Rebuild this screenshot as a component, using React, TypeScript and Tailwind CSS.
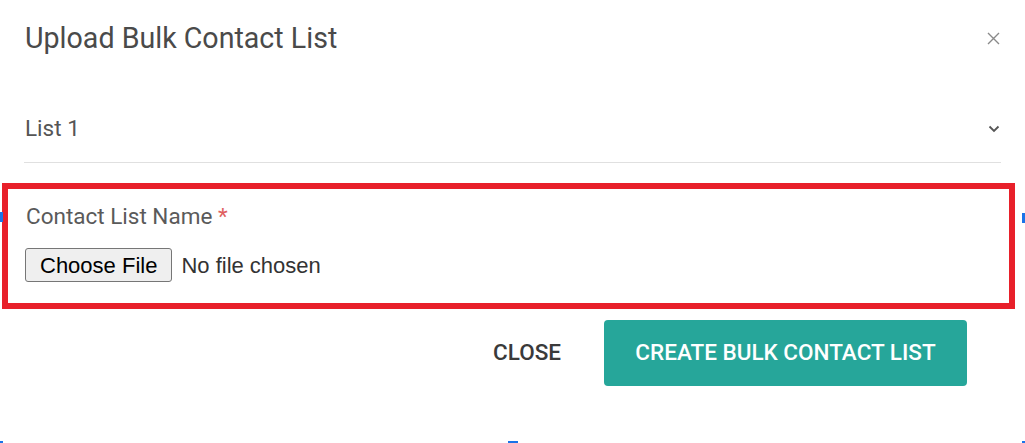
import React from 'react';

const App: React.FC = () => {
    return (
        <div className="relative w-[1025px] h-[443px] bg-white font-['Roboto',sans-serif] overflow-hidden">
            {/* header */}
            <div className="flex items-center justify-between pl-[25px] pr-[24px] pt-[22px] h-[54px]">
                <h2 className="text-[28.6px] leading-[32px] text-[#4a4a4a]">Upload Bulk Contact List</h2>
                <button className="w-[16px] h-[16px] flex items-center justify-center text-[#8a8a8a]">
                    <svg width="13" height="13" viewBox="0 0 13 13" fill="none" stroke="currentColor" strokeWidth="1.4">
                        <path d="M1 1L12 12M12 1L1 12" />
                    </svg>
                </button>
            </div>

            {/* list select */}
            <div className="mt-[42px] mx-[24px] h-[67px] flex items-center justify-between border-b border-[#e0e0e0] pl-[1px] pr-[1px]">
                <span className="text-[22.5px] text-[#555555]">List 1</span>
                <svg width="12" height="8" viewBox="0 0 12 8" fill="none" stroke="#555555" strokeWidth="1.8">
                    <path d="M1.5 1.5L6 6L10.5 1.5" />
                </svg>
            </div>

            {/* highlighted field */}
            <div className="mt-[20px] mx-[2px] w-[1013px] border-[6px] border-[#e8202a] pl-[17px] pt-[15px] pb-[21px]">
                <label className="block text-[22.5px] leading-[24px] text-[#5a5a5a] pl-[1px]">
                    Contact List Name <span className="text-[#e06060]">*</span>
                </label>
                <label className="mt-[20px] flex items-center gap-[9px] font-['Liberation_Sans',Arial,sans-serif] text-[22px] text-[#222222] cursor-pointer">
                    <span className="h-[34px] px-[14px] flex items-center bg-[#efefef] border border-[#767676] rounded-[3px] text-black">
                        Choose File
                    </span>
                    <span className="text-[#333333]">No file chosen</span>
                    <input type="file" className="hidden" />
                </label>
            </div>

            {/* actions */}
            <div className="mt-[11px] flex items-center justify-end gap-[43px] pr-[58px]">
                <button className="text-[22.5px] font-medium text-[#3a3a3a] uppercase">Close</button>
                <button className="h-[66px] w-[363px] rounded-[4px] bg-[#26a69a] text-[22.5px] font-medium text-white uppercase">
                    Create Bulk Contact List
                </button>
            </div>

            {/* selection handles */}
            <span className="absolute left-0 top-[212px] w-[3px] h-[10px] bg-[#1a73e8]" />
            <span className="absolute right-0 top-[213px] w-[3px] h-[10px] bg-[#1a73e8]" />
            <span className="absolute left-0 bottom-0 w-[3px] h-[2px] bg-[#1a73e8]" />
            <span className="absolute left-[508px] bottom-0 w-[10px] h-[2px] bg-[#1a73e8]" />
            <span className="absolute right-0 bottom-0 w-[3px] h-[2px] bg-[#1a73e8]" />
        </div>
    );
};

export default App;
